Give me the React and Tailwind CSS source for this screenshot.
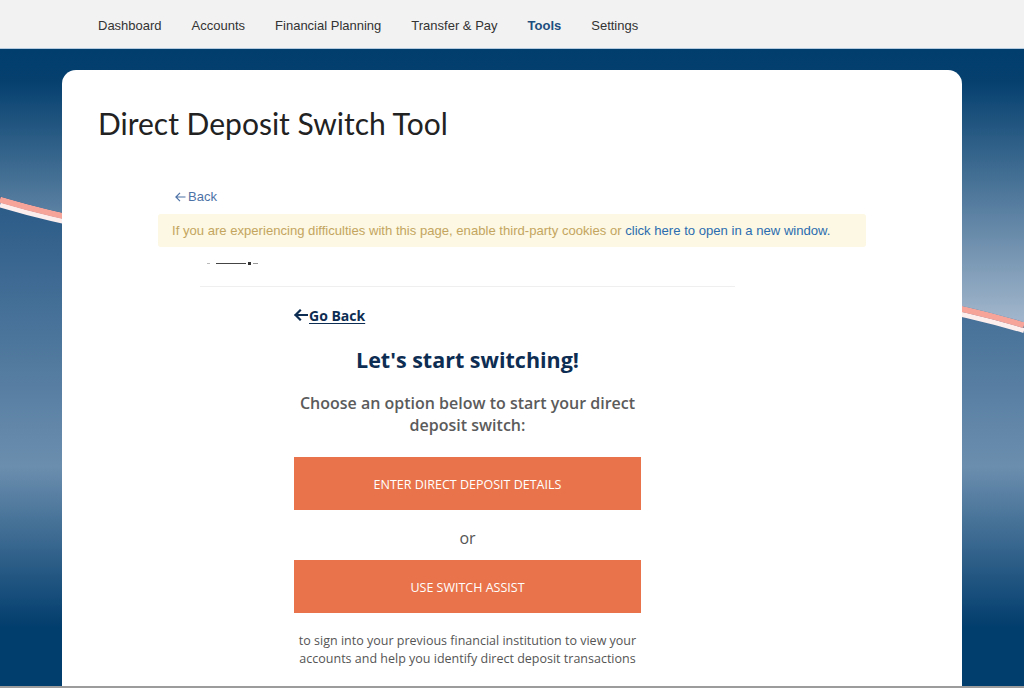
import React from 'react'

const navItems = ['Dashboard', 'Accounts', 'Financial Planning', 'Transfer & Pay', 'Tools', 'Settings']

function Backdrop() {
  // wave + gradient behind the card
  return (
    <svg className="absolute inset-0 w-full h-full" viewBox="0 0 1024 639" preserveAspectRatio="none">
      <defs>
        <linearGradient id="top" x1="0" y1="0" x2="0" y2="270" gradientUnits="userSpaceOnUse">
          <stop offset="0" stopColor="#013d6d" />
          <stop offset="0.12" stopColor="#05406f" />
          <stop offset="1" stopColor="#a0b5cb" />
        </linearGradient>
        <linearGradient id="bottom" x1="0" y1="150" x2="0" y2="639" gradientUnits="userSpaceOnUse">
          <stop offset="0" stopColor="#2a5a87" />
          <stop offset="0.55" stopColor="#6b8eae" />
          <stop offset="0.88" stopColor="#013d6d" />
          <stop offset="1" stopColor="#013d6d" />
        </linearGradient>
      </defs>
      <rect x="0" y="0" width="1024" height="639" fill="url(#bottom)" />
      <path d="M0,148 C300,238 724,184 1024,274" transform="translate(0,8.5)" stroke="#fdeeee" strokeWidth="5" fill="none" />
      <path d="M0,148 C300,238 724,184 1024,274" transform="translate(0,3)" stroke="#f6a39a" strokeWidth="6" fill="none" />
      <path d="M0,0 H1024 V274 C724,184 300,238 0,148 Z" fill="url(#top)" />
    </svg>
  )
}

export default function App() {
  return (
    <div className="w-[1024px] h-[688px] overflow-hidden flex flex-col bg-white">
      {/* top nav */}
      <nav className="h-[49px] shrink-0 bg-[#f2f2f2] border-b border-[#b5cce0] flex items-center pt-[4px] pl-[98px] gap-[30px] text-[13px] text-[#333] font-['Liberation_Sans',Arial,sans-serif]">
        {navItems.map((item) => (
          <span key={item} className={item === 'Tools' ? 'font-bold text-[#1d4e7e]' : ''}>
            {item}
          </span>
        ))}
      </nav>

      <main className="relative flex-1 min-h-0 overflow-hidden">
        <Backdrop />

        <div className="relative mx-[62px] mt-[21px] h-[700px] bg-white rounded-t-[14px]">
          <h1 className="pl-[36px] pt-[35px] text-[30px] leading-[36px] text-[#222] font-['Lato',sans-serif]">
            Direct Deposit Switch Tool
          </h1>

          <div className="mx-[96px] mt-[47px]">
            <a className="ml-[17px] flex items-center h-[18px] text-[13px] text-[#4d72a6] font-['Liberation_Sans',Arial,sans-serif]">
              <svg width="11" height="10" viewBox="0 0 11 10" className="mr-[2px]">
                <path d="M5 0.8 L0.9 5 L5 9.2 M0.9 5 H10.5" stroke="#4d72a6" strokeWidth="1.2" fill="none" />
              </svg>
              Back
            </a>
            <div className="mt-[8px] h-[33px] flex items-center px-[14px] bg-[#fcf8e3] rounded-[3px] text-[13.1px] text-[#c4a560] font-['Liberation_Sans',Arial,sans-serif]">
              If you are experiencing difficulties with this page, enable third-party cookies or&nbsp;
              <a className="text-[#2b6cb0]">click here to open in a new window.</a>
            </div>
          </div>

          {/* embedded frame */}
          <div className="ml-[138px] w-[535px] font-['Open_Sans',sans-serif]">
            <div className="h-[39px] flex items-start pt-[15px] pl-[7px] gap-[2px]">
              <span className="w-[3px] h-px bg-[#bbb] mt-[1px]" />
              <span className="ml-[4px] w-[30px] h-px bg-[#444] mt-[1px]" />
              <span className="w-[3px] h-[3px] bg-[#333]" />
              <span className="w-[5px] h-px bg-[#999] mt-[1px]" />
            </div>
            <div className="h-px bg-[#efefef]" />

            <div className="w-[347px] mx-auto flex flex-col">
              <a className="mt-[18px] h-[20px] flex items-center text-[14px] font-bold text-[#0e2d52]">
                <svg width="14" height="12" viewBox="0 0 14 12" className="mr-[1px]">
                  <path d="M6 1.5 L1.5 6 L6 10.5 M1.5 6 H13.5" stroke="#0e2d52" strokeWidth="2.2" fill="none" strokeLinecap="square" />
                </svg>
                <span className="underline underline-offset-2">Go Back</span>
              </a>
              <h2 className="mt-[21px] h-[28px] text-center text-[21.5px] leading-[28px] font-bold text-[#0e2d52]">
                Let's start switching!
              </h2>
              <p className="mt-[18px] text-center text-[16px] leading-[22px] font-semibold text-[#5b5b5b]">
                Choose an option below to start your direct deposit switch:
              </p>
              <button className="mt-[21px] h-[53px] pt-[3px] bg-[#e9744b] text-white text-[12.5px] uppercase">
                Enter Direct Deposit Details
              </button>
              <div className="mt-[16px] h-[24px] text-center text-[16px] leading-[24px] text-[#555]">or</div>
              <button className="mt-[10px] h-[53px] pt-[3px] bg-[#e9744b] text-white text-[12.5px] uppercase">
                Use Switch Assist
              </button>
              <p className="mt-[19px] -mx-[4px] text-center text-[12.5px] leading-[18px] text-[#555]">
                to sign into your previous financial institution to view your accounts and help you identify direct deposit transactions
              </p>
            </div>
          </div>
        </div>
      </main>
      <div className="h-[2px] shrink-0 bg-[#9c9c9c]" />
    </div>
  )
}
